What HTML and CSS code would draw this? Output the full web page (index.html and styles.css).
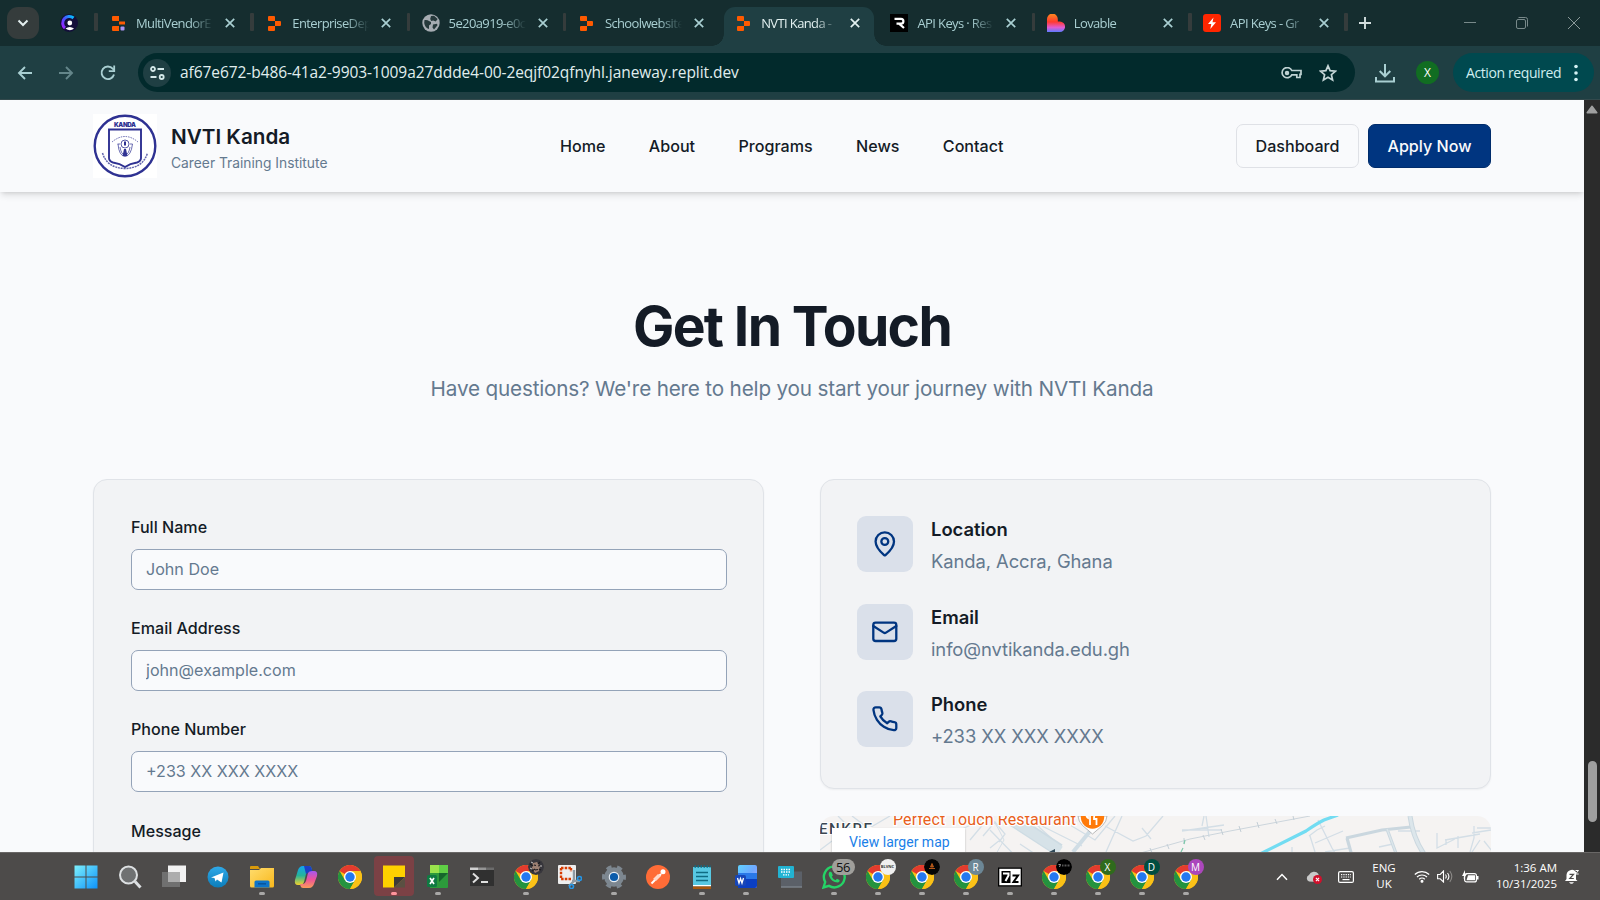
FILE: index.html
```html
<!DOCTYPE html>
<html lang="en">
<head>
<meta charset="utf-8">
<title>NVTI Kanda - Career Training Institute</title>
<link rel="stylesheet" href="styles.css">
</head>
<body>
<svg class="defs" width="0" height="0">
  <defs>
    <linearGradient id="win" x1="0" y1="0" x2="1" y2="1"><stop offset="0" stop-color="#7df0fc"/><stop offset="1" stop-color="#0d92fa"/></linearGradient>
    <linearGradient id="tg" x1="0" y1="0" x2="0" y2="1"><stop offset="0" stop-color="#2fa9e8"/><stop offset="1" stop-color="#0c7dba"/></linearGradient>
    <linearGradient id="folder" x1="0" y1="0" x2="1" y2="1"><stop offset="0" stop-color="#ffdc6d"/><stop offset="1" stop-color="#f9b81c"/></linearGradient>
    <linearGradient id="cpa" x1="0" y1="0" x2="0" y2="1"><stop offset="0" stop-color="#12a4f0"/><stop offset=".5" stop-color="#25b49a"/><stop offset="1" stop-color="#f3d02c"/></linearGradient>
    <linearGradient id="cpb" x1="0" y1="0" x2="0" y2="1"><stop offset="0" stop-color="#a557ee"/><stop offset=".5" stop-color="#ee5399"/><stop offset="1" stop-color="#fb9b5a"/></linearGradient>
    <linearGradient id="love" x1="0" y1="0" x2="0" y2="1"><stop offset="0" stop-color="#ff8a1e"/><stop offset=".45" stop-color="#ff3a2f"/><stop offset=".75" stop-color="#e25bd0"/><stop offset="1" stop-color="#5b7cff"/></linearGradient>
    <linearGradient id="clerk" x1="0" y1="1" x2="1" y2="0"><stop offset="0" stop-color="#a020ff"/><stop offset=".5" stop-color="#4a50ff"/><stop offset="1" stop-color="#00c8ff"/></linearGradient>
    <linearGradient id="word" x1="0" y1="0" x2="1" y2="1"><stop offset="0" stop-color="#5fd2ff"/><stop offset=".5" stop-color="#6fa8ff"/><stop offset="1" stop-color="#b9a6ff"/></linearGradient>
    <symbol id="replit" viewBox="0 0 13 15"><path fill="#ff5a00" d="M1 0h5a1 1 0 0 1 1 1v4H1a1 1 0 0 1-1-1V1a1 1 0 0 1 1-1zM7 5h5a1 1 0 0 1 1 1v3a1 1 0 0 1-1 1H7zM1 10h6v4a1 1 0 0 1-1 1H1a1 1 0 0 1-1-1v-3a1 1 0 0 1 1-1z"/></symbol>
    <symbol id="x" viewBox="0 0 10 10"><path d="M.8.8l8.400 8.400M9.200.8L.8 9.200" fill="none" stroke="currentColor" stroke-width="1.7"/></symbol>
    <symbol id="chrome" viewBox="0 0 24 24">
      <circle cx="12" cy="12" r="12" fill="#fbc116"/>
      <path fill="#e33b2e" d="M12 12L1.600 6A12 12 0 0 1 22.400 6H12z"/>
      <path fill="#24933f" d="M1.600 6A12 12 0 0 0 12 24l5.200-9L12 12 6.800 15z"/>
      <path fill="#fbc116" d="M22.400 6A12 12 0 0 1 12 24l5.200-9A6 6 0 0 0 17.200 9L14 6z"/>
      <circle cx="12" cy="12" r="6" fill="#fff"/><circle cx="12" cy="12" r="4.700" fill="#2478f0"/>
    </symbol>
  </defs>
</svg>

<div class="tabstrip">
  <div class="tab-search"><svg width="12" height="8" viewBox="0 0 12 8"><path d="M1.500 1.500L6 6l4.500-4.500" fill="none" stroke="#e3eeee" stroke-width="2"/></svg></div>
  <svg class="pinned" width="18" height="18" viewBox="0 0 18 18"><circle cx="9" cy="9" r="9" fill="#130f3a"/><path d="M13.500 4A6.300 6.300 0 1 0 5 14" fill="none" stroke="url(#clerk)" stroke-width="3"/><circle cx="9.800" cy="9" r="2.400" fill="#fff"/><path d="M5.500 14.500q4.300-3 8.500 0-4 3.500-8.500 0z" fill="#fff"/></svg>
  <div class="tab sep"><span class="fav"><svg width="13" height="15" viewBox="0 0 13 15"><path fill="#ff5a00" d="M1 0h6v5H1a1 1 0 0 1-1-1V1a1 1 0 0 1 1-1zM7 5.500h6v3H7zM1 10h6v5H1a1 1 0 0 1-1-1v-3a1 1 0 0 1 1-1z"/><rect x="8.500" y="10.500" width="4" height="4" rx="1" fill="#a993f5"/></svg></span><span class="tt">MultiVendorE</span><svg class="cl"><use href="#x"/></svg></div>
  <div class="tab sep"><span class="fav"><svg width="13" height="15"><use href="#replit"/></svg></span><span class="tt">EnterpriseDep</span><svg class="cl"><use href="#x"/></svg></div>
  <div class="tab sep"><span class="fav"><svg width="18" height="18" viewBox="0 0 18 18"><circle cx="9" cy="9" r="8.700" fill="#a6acb2"/><path fill="#26393b" d="M2.500 6q3-.5 4.500 1l2 1v2l-2 1.500v3.500Q3 14 2.200 9zM9 2l3-.3 3.700 3.300-2 2.500-2.500-1-2 .5-1-2zM11 10.500l4-.8.500 1.500-3.500 4.300-1.500-2z"/></svg></span><span class="tt">5e20a919-e0c</span><svg class="cl"><use href="#x"/></svg></div>
  <div class="tab sep"><span class="fav"><svg width="13" height="15"><use href="#replit"/></svg></span><span class="tt">Schoolwebsite</span><svg class="cl"><use href="#x"/></svg></div>
  <div class="tab active"><span class="fav"><svg width="13" height="15"><use href="#replit"/></svg></span><span class="tt">NVTI Kanda - </span><svg class="cl"><use href="#x"/></svg></div>
  <div class="tab"><span class="fav"><svg width="18" height="18" viewBox="0 0 18 18"><path d="M0 0h18v18H0z"/><path d="M4.500 4.800h6.500a2.400 2.400 0 0 1 0 4.800H6.500M9 9.600l5 4.400" fill="none" stroke="#fff" stroke-width="2.200"/></svg></span><span class="tt">API Keys · Res</span><svg class="cl"><use href="#x"/></svg></div>
  <div class="tab sep"><span class="fav"><svg width="18" height="18" viewBox="0 0 18 18"><path fill="url(#love)" d="M0 18V5a5.400 5.400 0 0 1 10.800 0v2.500h2a5.200 5.200 0 0 1 0 10.500z"/></svg></span><span class="tt">Lovable</span><svg class="cl"><use href="#x"/></svg></div>
  <div class="tab sep"><span class="fav"><svg width="18" height="18" viewBox="0 0 18 18"><rect width="18" height="18" rx="3" fill="#ff2600"/><path fill="#fff" d="M10.500 3.500L5 10h3.300l-1 5L13 8.300H9.500z"/></svg></span><span class="tt">API Keys - Gr</span><svg class="cl"><use href="#x"/></svg></div>
  <div class="newtab sep"><svg width="12" height="12" viewBox="0 0 12 12"><path d="M6 0v12M0 6h12" stroke="#d2dede" stroke-width="1.900"/></svg></div>
  <div class="winctl">
    <svg width="12" height="12" viewBox="0 0 12 12"><path d="M0 5.500h12" stroke="#78898a"/></svg>
    <svg width="12" height="12" viewBox="0 0 12 12" fill="none" stroke="#78898a"><rect x=".5" y="2.500" width="9" height="9" rx="1.500"/><path d="M2.500.5H9.500a2 2 0 0 1 2 2v7"/></svg>
    <svg width="12" height="12" viewBox="0 0 12 12"><path d="M0 0l12 12M12 0L0 12" stroke="#8a9999"/></svg>
  </div>
</div>

<div class="toolbar">
  <svg class="back" width="16" height="14" viewBox="0 0 16 14"><path d="M15 7H2M8 1L2 7l6 6" fill="none" stroke="#a9cfd2" stroke-width="1.900"/></svg>
  <svg class="fwd" width="16" height="14" viewBox="0 0 16 14"><path d="M1 7H14M8 1l6 6-6 6" fill="none" stroke="#64868a" stroke-width="1.900"/></svg>
  <svg class="rel" width="16" height="16" viewBox="0 0 16 16"><path d="M14 9.500A6.300 6.300 0 1 1 12.700 3.700L14 5" fill="none" stroke="#a9cfd2" stroke-width="1.900"/><path d="M14.200.5v5.700H8.800" fill="none" stroke="#a9cfd2" stroke-width="1.800"/></svg>
  <div class="omni">
    <span class="site"><svg width="15" height="14" viewBox="0 0 15 14" fill="none" stroke="#d4e8e9" stroke-width="1.800"><circle cx="3" cy="3" r="2"/><path d="M7.500 3H14M.5 11H6.500"/><circle cx="11.700" cy="11" r="2"/></svg></span>
    <span class="url">af67e672-b486-41a2-9903-1009a27ddde4-00-2eqjf02qfnyhl.janeway.replit.dev</span>
    <svg class="key" width="21" height="12" viewBox="0 0 21 12" fill="none" stroke="#bfd2d3" stroke-width="1.700"><path d="M10.800 3.500H20v3.800h-1V10.500h-3.200V7.800H10.800A5.100 5.100 0 1 1 10.800 3.500z"/><circle cx="6" cy="6" r="1.400" fill="#bfd2d3"/></svg>
    <svg class="star" width="18" height="18" viewBox="0 0 18 18"><path d="M9 1.800l2.100 4.900 5.300.5-4 3.500 1.200 5.200L9 13.200l-4.600 2.700 1.200-5.200-4-3.500 5.300-.5z" fill="none" stroke="#c5d6d7" stroke-width="1.700"/></svg>
  </div>
  <svg class="dl" width="20" height="20" viewBox="0 0 20 20" fill="none" stroke="#a9cfd2" stroke-width="2"><path d="M10 1v12M4.700 8L10 13.300 15.300 8M1 14v4.500h18V14"/></svg>
  <span class="me">X</span>
  <span class="action">Action required<svg width="4" height="18" viewBox="0 0 4 18" fill="#d4f2f4"><circle cx="2" cy="2.500" r="1.800"/><circle cx="2" cy="9" r="1.800"/><circle cx="2" cy="15.500" r="1.800"/></svg></span>
</div>

<div class="view">
  <div class="page">
    <header class="head">
      <svg class="logo" width="64" height="64" viewBox="0 0 64 64">
        <path fill="#fff" d="M0 0h64v64H0z"/>
        <g fill="none" stroke="#2e3192"><circle cx="32" cy="32" r="30.300" stroke-width="2.400"/>
        <path d="M16 15.500H48V44q0 3-4 4.500-7 1-12 4.500-5-3.500-12-4.500-4-1.500-4-4.500z" stroke-width="1.900"/>
        <circle cx="32" cy="30" r="4" stroke-width=".8"/><path d="M25 30q1 12 7 12.500Q38 42 39.500 30M24.500 30h2.500M37 30h2.500M27 33q1 7 5 8.500M37 33q-1 7-5 8.500" stroke-width=".7"/>
        <path d="M19 28q13-11 26 0" stroke-width=".9" stroke-dasharray="1.500 1" opacity=".8"/><path d="M9.500 39Q14 54 32 54.500 50 54 54.500 39" stroke-width="1.500" stroke-dasharray="2 .8" opacity=".75"/></g>
        <path d="M31 35h2l1.500 7h-5zM31 27.500h2v4h-2z" fill="#2e3192"/>
        <text class="crest" x="32" y="13.200" text-anchor="middle" textLength="22">KANDA</text>
      </svg>
      <div class="brand"><b>NVTI Kanda</b><span>Career Training Institute</span></div>
      <nav class="nav"><a>Home</a><a>About</a><a>Programs</a><a>News</a><a>Contact</a></nav>
      <div class="cta"><a class="btn">Dashboard</a><a class="btn primary">Apply Now</a></div>
    </header>
    <main class="main">
      <h1>Get In Touch</h1>
      <p class="lead">Have questions? We're here to help you start your journey with NVTI Kanda</p>
      <div class="cols">
        <form class="card form">
          <label>Full Name</label><input placeholder="John Doe">
          <label>Email Address</label><input placeholder="john@example.com">
          <label>Phone Number</label><input placeholder="+233 XX XXX XXXX">
          <label>Message</label>
        </form>
        <div class="right">
          <div class="card info">
            <div class="item"><span class="ico"><svg viewBox="0 0 24 24"><path d="M20 10c0 4.993-5.539 10.193-7.399 11.799a1 1 0 0 1-1.202 0C9.539 20.193 4 14.993 4 10a8 8 0 0 1 16 0"/><circle cx="12" cy="10" r="3"/></svg></span><div><b>Location</b><span>Kanda, Accra, Ghana</span></div></div>
            <div class="item"><span class="ico"><svg viewBox="0 0 24 24"><rect width="20" height="16" x="2" y="4" rx="2"/><path d="m22 7-8.970 5.700a1.940 1.940 0 0 1-2.060 0L2 7"/></svg></span><div><b>Email</b><span>info@nvtikanda.edu.gh</span></div></div>
            <div class="item"><span class="ico"><svg viewBox="0 0 24 24"><path d="M22 16.920v3a2 2 0 0 1-2.180 2 19.790 19.790 0 0 1-8.630-3.070 19.500 19.500 0 0 1-6-6 19.790 19.790 0 0 1-3.070-8.670A2 2 0 0 1 4.110 2h3a2 2 0 0 1 2 1.720 12.840 12.840 0 0 0 .7 2.810 2 2 0 0 1-.45 2.110L8.090 9.910a16 16 0 0 0 6 6l1.270-1.270a2 2 0 0 1 2.110-.45 12.840 12.840 0 0 0 2.810.7A2 2 0 0 1 22 16.920z"/></svg></span><div><b>Phone</b><span>+233 XX XXX XXXX</span></div></div>
          </div>
          <div class="map">
            <svg width="671" height="60" viewBox="0 0 671 60" fill="none">
              <path d="M0 0h671v60H0z" fill="#f5f3f2"/>
              <g stroke="#d3dee6" stroke-width="1.300">
                <path d="M0 34l12-9M18 0l12 12M32 0l24 18M46 14L70 0M140 14L170 0M150 24l20-24M163 20l12-14 10 12-6 8M170 32l10-8M200 28l30 20M222 10L262 30M235 0l40 24 20-24M170 14L205 50M285 10l28 15 13-5L343 0M302 0L286 36M322 12l9 11M210 0l10 12 20 18"/>
                <path d="M362 14h40M386 0l3 21M384 0l-2 10M362 15l42-6M498 4l14 28 3 5M489 20l8-6 8-4M490 20l5 16M495 27l28-12M505 36l25-4M472 37v-6M578 15h22M559 31l14-3M617 17v15l18-9M625 24l35-6M626 23v6M638 20v12M654 10v12l-4 14M652 17l19-3M660 24l-8 12M657 12h14M664 25l8 10"/>
              </g>
              <path d="M172 2l7 12 5 10-8 14" stroke="#d3dee6"/>
              <path d="M187 0l52 34" stroke="#cddbe3" stroke-width="13"/><path d="M188 1l52 34" stroke="#d6e2e8" stroke-width="10"/>
              <path d="M253 36l18-22" stroke="#d0dde5" stroke-width="4"/>
              <path d="M229 36l6-3v3z" fill="#2f4858"/>
              <path d="M310 40l60-17 40-8 80-15" stroke="#ccd5dc"/><path d="M330 32l2 5M347 28l2 5M364 22v6M383 19l2 5M401 13l2 6M419 10l2 6M437 6l2 6M455 3l2 5M473 0l1 4" stroke="#c3ced6"/>
              <path d="M365 24l-1 4M363 32l-2 4" stroke="#7fc9ab" stroke-width="1.200"/>
              <path d="M440 38l46-23q10-7 18-11l14-5" stroke="#72dcf2" stroke-width="3.200"/>
              <g stroke="#cad7df" stroke-width="3.200"><path d="M526 22l36-8 29-3M527 22l5 18M567 13l10 27"/><path d="M590 0q3 22 14 38" stroke-width="5"/></g>
              <g stroke="#dce6eb" stroke-width="1.300"><path d="M567 13l10 27"/><path d="M590 0q3 22 14 38" stroke-width="3"/></g>
              <path d="M258 0a14.500 14.500 0 0 0 4.500 9.500L272.500 18l10-8.500A14.500 14.500 0 0 0 287 0z" fill="#fff" stroke="#a8a8a8" stroke-width=".8"/><circle cx="272.500" cy="1" r="11.700" fill="#ff7a09"/><path d="M268-4v6q-2-1-2-6M270-4v13M277-4q-3 1-3 7h2.500v6" stroke="#fff" stroke-width="1.800"/>
              <text class="poi" x="73" y="9" textLength="183">Perfect Touch Restaurant</text>
              <text class="area" x="-1" y="18" textLength="53">ENKRE</text>
            </svg>
            <div class="larger">View larger map</div>
          </div>
        </div>
      </div>
    </main>
  </div>
  <div class="scroll"><svg width="12" height="9" viewBox="0 0 12 9"><path d="M6 1.300L10.800 7.700H1.200z" fill="#a0a0a0" stroke="#a0a0a0" stroke-width="1.500" stroke-linejoin="round"/></svg><i></i></div>
</div>

<div class="taskbar">
  <div class="apps">
    <span class="app"><svg viewBox="0 0 24 24"><path fill="url(#win)" d="M.5.5h11v11H.5zM12.500.5h11v11h-11zM.5 12.500h11v11H.5zM12.500 12.500h11v11h-11z"/></svg></span>
    <span class="app"><svg viewBox="0 0 24 24" fill="none" stroke="#dde0e2"><circle cx="10.500" cy="10" r="8.500" stroke-width="2" fill="#6f7172"/><path d="M17 16.500l5.500 6" stroke-width="3"/></svg></span>
    <span class="app"><svg viewBox="0 0 24 24"><path fill="#f2f2f2" d="M6 .5h18V17H6z"/><path fill="#707070" d="M0 7h18v15H0z"/><path fill="#adadad" d="M6 7h12v10H6z"/></svg></span>
    <span class="app"><svg viewBox="0 0 24 24"><circle cx="12" cy="12" r="10.500" fill="url(#tg)"/><path fill="#fff" d="M5 12.500L17.500 7.500l-2 10-4.500-3-1.500 2-1-3.500z"/></svg></span>
    <span class="app run"><svg viewBox="0 0 24 24"><path fill="#d99a0b" d="M0 2q0-1 1-1h7l2 3H0z"/><path fill="url(#folder)" d="M0 5h9l2-2h13v18q0 1.500-1.500 1.500h-21Q0 22.500 0 21z"/><path fill="#0f74c9" d="M4.500 22.500V17q0-1.500 1.500-1.500h12q1.500 0 1.500 1.500v5.500z"/><path stroke="#0b549b" stroke-width="1.500" d="M8 18.800h8"/></svg></span>
    <span class="app"><svg viewBox="0 0 24 24"><path fill="url(#cpa)" d="M6 2q1-1 3-1h6q2 0 2.500 2l.5 3h-3q-2 0-3 3l-2 8q-1 3-4 3H4q-4 0-3-5L4 5q.7-2 2-3z"/><path fill="#1c3fc4" d="M10 1h5q2 0 2.500 2l1 4h-3L12 9z"/><path fill="url(#cpb)" d="M18 22q-1 1-3 1H9q-2 0-2.500-2L6 19h3q2 0 3-3l2-8q1-2 4-2h2q4 0 3 5l-3 8q-.7 2-2 3z"/></svg></span>
    <span class="app"><svg><use href="#chrome"/></svg></span>
    <span class="app run sticky"><svg viewBox="0 0 24 24"><path fill="#ffd100" d="M1 .5h22V12L12 22.500H1z"/><path fill="#3c3a38" d="M12 12h11L12 22.500z"/><path fill="#5a5042" d="M23 12v10.500H12z"/></svg></span>
    <span class="app run"><svg viewBox="0 0 24 24"><path fill="#2c9a3b" d="M4 1q0-1 1-1h16q1 0 1 1v21q0 1-1 1H4z"/><path fill="#9be34c" d="M4 0h9v8H4z"/><path fill="#5fce45" d="M13 0h9v8h-9z"/><path fill="#15662c" d="M13 8h9l-9 9z"/><rect x="1" y="10" width="10" height="12" rx="1.500" fill="#0f7a42"/><path d="M4 13l4 6M8 13l-4 6" stroke="#fff" stroke-width="1.700"/></svg></span>
    <span class="app"><svg viewBox="0 0 24 24"><path fill="#303030" d="M0 5h24v16H0z"/><path fill="#d0d0d0" d="M0 2.500h8V5H0z"/><path fill="#949494" d="M8 2.500h8V5H8z"/><path fill="#6b6b6b" d="M16 2.500h8V5h-8z"/><path d="M3 8.500l5 4.500-5 4.500M11 17h7" fill="none" stroke="#e0e0e0" stroke-width="2"/></svg></span>
    <span class="app run"><svg><use href="#chrome"/></svg><svg class="av" viewBox="0 0 16 16"><circle cx="8" cy="8" r="8" fill="#37363c"/><path fill="#9d8073" d="M5 4l4-1 3 4-1 5-4 2-3-5z"/><path d="M2 5l3 2M4 12l3-2M6 6l2 .5M10 7l2-.5M7 11l3-.5M12 3l-2 2M13 11l-2-1" stroke="#1e1c20" stroke-width="1.200"/><path d="M3 3l2 1M13 6v2M2 9l2 1" stroke="#c9c5c3"/></svg></span>
    <span class="app"><svg viewBox="0 0 24 24"><rect x="0" y="0" width="18" height="19" rx="1" fill="#eee"/><path d="M3 3h10M3 3v11h10M13 3v4" fill="none" stroke="#d83b01" stroke-width="2.400" stroke-dasharray="2.500 1.200"/><path d="M16 5v11l-5 5M14 16h8" fill="none" stroke="#8f9aa3" stroke-width="2.400"/><circle cx="13.500" cy="21.500" r="2" fill="none" stroke="#2496e8" stroke-width="1.600"/><circle cx="21.500" cy="13.500" r="2" fill="none" stroke="#2496e8" stroke-width="1.600"/></svg></span>
    <span class="app run"><svg viewBox="0 0 24 24"><circle cx="12" cy="12" r="9.800" fill="#7d8790"/><circle cx="12" cy="12" r="10" fill="none" stroke="#7d8790" stroke-width="4" stroke-dasharray="5 5.470" stroke-dashoffset="2.500"/><circle cx="12" cy="12" r="5.300" fill="#e8eef4"/><circle cx="12" cy="12" r="4.100" fill="#0b5cab"/></svg></span>
    <span class="app"><svg viewBox="0 0 24 24"><circle cx="12" cy="12" r="12" fill="#ff6c37"/><path d="M5.500 18.500L15 9" stroke="#fff" stroke-width="2"/><path d="M7 14l5-5 3 2-5 5z" fill="#ffd9cb"/><circle cx="17" cy="6.800" r="2.500" fill="#fff"/></svg></span>
    <span class="app run"><svg viewBox="0 0 24 24"><path fill="#58c8e2" d="M3 2h18v19H3z"/><path fill="#fff" d="M3 20h18v1.500H3z"/><path fill="#a8580d" d="M3 21.500h18V24H3z"/><path stroke="#0f6c83" stroke-width="1.600" d="M6 7.500h12M6 11.500h12M6 15.500h12"/><path stroke="#0f6c83" stroke-width="2.500" stroke-dasharray="1.500 1.500" d="M4.500 1.500h16"/></svg></span>
    <span class="app run"><svg viewBox="0 0 24 24"><rect x="4" y="0" width="19" height="23" rx="2" fill="url(#word)"/><path fill="#2a78e8" d="M4 8h19v7H4z"/><path fill="#0b3fc2" d="M4 14h19v7q0 2-2 2H4z"/><rect x="1" y="10" width="11" height="11" rx="1.800" fill="#1746b8"/><path d="M3.500 13l1.500 5 1.500-4.500L8 18l1.500-5" fill="none" stroke="#fff" stroke-width="1.300"/></svg></span>
    <span class="app"><svg viewBox="0 0 24 24"><path fill="#5b6068" d="M3 6.500h21v16H3z"/><path fill="#8b939b" d="M3 21.500h21v1H3z"/><rect width="16" height="12" x="0" y="1" rx="1" fill="#22b3d3"/><path d="M3 4.500h10M3 7h10M5 9.800h6" stroke="#fff" stroke-width="1.300" stroke-dasharray="1.500 1"/></svg></span>
    <span class="app run"><svg viewBox="0 0 24 24" fill="none"><path d="M1.500 22.500L3.200 17A10.400 10.400 0 1 1 7 20.900z" stroke="#25d366" stroke-width="2.400"/><path d="M8 6.500q-2 1.500-1 4.500 2.500 6 8.500 6.500 2.500-.5 2-2.500l-2.500-1.200-1.500 1.500q-2.500-1-3.700-3.500l1-1.300-1-3z" fill="#25d366"/></svg><i class="count">56</i></span>
    <span class="app run"><svg><use href="#chrome"/></svg><i class="av blanc">BLVNC</i></span>
    <span class="app run"><svg><use href="#chrome"/></svg><svg class="av" viewBox="0 0 16 16"><circle cx="8" cy="8" r="8" fill="#050505"/><path d="M8 4.500l1.500 3.500h-3zM5 9.500h6" fill="#b4581a" stroke="#b4581a"/></svg></span>
    <span class="app run"><svg><use href="#chrome"/></svg><i class="av slate">R</i></span>
    <span class="app run"><svg viewBox="0 0 24 24"><path fill="#000" d="M0 2.500h24v19H0z"/><path fill="#fff" d="M1.300 3.800h21.400v16.400H1.300z"/><path fill="#000" d="M3.500 6h9v12h-9z"/><path d="M5 8.500h5.500v2L7.500 16" fill="none" stroke="#fff" stroke-width="2"/><path d="M14.500 10.500H20L15.500 17h5" fill="none" stroke="#000" stroke-width="2"/></svg></span>
    <span class="app run"><svg><use href="#chrome"/></svg><svg class="av" viewBox="0 0 16 16"><circle cx="8" cy="8" r="8"/><path d="M2.500 5.500h2L3.500 8" fill="none" stroke="#bbb" stroke-width=".8"/><path d="M6 6.500h8" stroke="#555" stroke-width="2" stroke-dasharray="1 .5"/></svg></span>
    <span class="app run"><svg><use href="#chrome"/></svg><i class="av green">X</i></span>
    <span class="app run"><svg><use href="#chrome"/></svg><i class="av teal">D</i></span>
    <span class="app run"><svg><use href="#chrome"/></svg><i class="av purple">M</i></span>
  </div>
  <div class="tray">
    <svg width="12" height="8" viewBox="0 0 12 8"><path d="M1 6.800L6 1.500l5 5.300" fill="none" stroke="#fff" stroke-width="1.500"/></svg>
    <svg class="t2" width="16" height="14" viewBox="0 0 16 14"><path fill="#c9c9c9" d="M3 11.500a3.500 3.500 0 0 1 0-6.500 5.500 5.500 0 0 1 9.500-1v8z"/><circle cx="11.500" cy="9.500" r="4.500" fill="#d1102c"/><path d="M9.900 7.900l3.200 3.200M13.100 7.900l-3.200 3.200" stroke="#fff" stroke-width="1.100"/></svg>
    <svg class="t3" width="16" height="12" viewBox="0 0 16 12" fill="none" stroke="#fff"><rect x=".6" y=".6" width="14.800" height="10.800" rx="1.500" stroke-width="1.200"/><path d="M3 3.700h10M3 6h10" stroke-width="1.200" stroke-dasharray="1.300 1"/><path d="M4.500 8.600h7" stroke-width="1.200"/></svg>
    <div class="lang">ENG<br>UK</div>
    <svg class="t4" width="16" height="13" viewBox="0 0 16 13" fill="none" stroke="#fff" stroke-width="1.200"><path d="M.8 4.500a10.300 10.300 0 0 1 14.400 0M3 7a7.200 7.200 0 0 1 10 0M5.200 9.300a4 4 0 0 1 5.600 0"/><circle cx="8" cy="11.300" r=".9" fill="#fff"/></svg>
    <svg class="t5" width="16" height="13" viewBox="0 0 16 13" fill="none" stroke="#fff" stroke-width="1.100"><path d="M.6 4.500h2.600L6.500 1v11L3.200 8.800H.6zM8.500 4.500q1.500 2 0 4"/><path d="M10.500 3q2.800 3.500 0 7" /><path d="M12.800 1q4 5.500 0 11" stroke="#8a8886"/></svg>
    <svg class="t6" width="17" height="13" viewBox="0 0 17 13"><rect x="2.600" y="3.600" width="11.800" height="8.300" rx="2" fill="none" stroke="#fff" stroke-width="1.200"/><path fill="#fff" d="M6 5.300h7v5H4.500zM15 6h1.500v3.500H15zM3 0L0 6h2l-.5 3L5 4H3z"/></svg>
    <div class="clock">1:36 AM<br>10/31/2025</div>
    <svg class="t7" width="15" height="16" viewBox="0 0 15 16"><path fill="#fff" d="M0 12l1.500-2V6a5.300 5.300 0 0 1 9.500-3v7.500l1.500 1.500zM4 13.200h5q-2.500 3-5 0z"/><path d="M4.500 5.300h4L4.800 9.500h4" fill="none" stroke="#4d4b4a" stroke-width="1.200"/><path d="M10.500 1.500h3L10.500 5h3.200" fill="none" stroke="#fff"/></svg>
  </div>
</div>
</body>
</html>
```
FILE: styles.css
```css
* { box-sizing: border-box; }
body { margin: 0; width: 1600px; height: 900px; overflow: hidden; display: flex; flex-direction: column; font-family: "Open Sans", "Noto Sans", sans-serif; background: #1f3f43; }
svg { flex: none; display: block; }
.defs { position: absolute; }

/* Browser tabs */
.tabstrip { height: 46px; background: #152d2f; display: flex; align-items: center; color: #a9cfd2; flex: none; }
.tab-search { width: 32px; height: 32px; margin-left: 7px; border-radius: 11px; background: #353c3c; display: flex; align-items: center; justify-content: center; }
.pinned { margin: 0 16px 0 21px; }
.tab, .newtab { width: 156.300px; height: 46px; display: flex; align-items: center; position: relative; flex: none; }
.sep::before { content: ""; position: absolute; left: 0; top: 13px; width: 3.500px; height: 18px; background: #353c3c; border-radius: 1px; }
.fav { width: 18px; margin-left: 15px; display: flex; justify-content: center; }
.tt { width: 77px; margin-left: 9px; font-size: 13px; letter-spacing: -0.620px; white-space: nowrap; overflow: hidden; -webkit-mask-image: linear-gradient(90deg, #000 70%, transparent 100%); mask-image: linear-gradient(90deg, #000 70%, transparent 100%); }
.cl { width: 10px; height: 10px; margin-left: 12px; }
.active { color: #e3f1f1; z-index: 1; }
.active::before { content: ""; position: absolute; z-index: -1; left: 5px; top: 7px; width: 150px; height: 39px; background: #1f3f43; border-radius: 11px 11px 0 0; }
.active::after { content: ""; position: absolute; z-index: -1; left: -7px; bottom: 0; width: 174px; height: 12px; background: radial-gradient(circle at 0 0, transparent 11.500px, #1f3f43 12px) left / 12px 12px no-repeat, radial-gradient(circle at 100% 0, transparent 11.500px, #1f3f43 12px) right / 12px 12px no-repeat; }
.newtab { width: 40px; padding-left: 15px; }
.winctl { margin-left: auto; display: flex; gap: 40px; padding-right: 20px; }

/* Toolbar */
.toolbar { height: 54px; flex: none; background: #1f3f43; border-bottom: 1px solid #33494c; display: flex; align-items: center; }
.back { margin-left: 17px; }
.fwd { margin-left: 25px; }
.rel { margin-left: 26px; }
.omni { margin-left: 22px; width: 1217px; height: 39px; border-radius: 20px; background: #022a2c; display: flex; align-items: center; }
.site { width: 28px; height: 28px; margin-left: 5px; border-radius: 50%; background: #1f3f43; display: flex; align-items: center; justify-content: center; }
.url { margin-left: 9px; font-size: 15.500px; letter-spacing: -0.065px; color: #e0eeee; white-space: nowrap; position: relative; top: -1px; }
.key { margin-left: auto; }
.star { margin: 0 18px 0 17px; }
.dl { margin-left: 20px; }
.me { width: 23px; height: 23px; margin-left: 21px; border-radius: 50%; background: #116d22; color: #fff; font-size: 12px; display: flex; align-items: center; justify-content: center; }
.action { width: 141px; height: 39px; margin-left: 14px; padding: 0 16px 0 13px; border-radius: 20px; background: #00494f; color: #cfeef0; font-size: 14px; letter-spacing: -0.400px; white-space: nowrap; display: flex; align-items: center; justify-content: space-between; }

/* Page */
.view { height: 752px; flex: none; display: flex; overflow: hidden; }
.page { width: 1584px; background: #f9fafc; font-family: Inter, sans-serif; color: #141b26; overflow: hidden; }
.head { position: relative; height: 92px; padding: 0 93px; display: flex; align-items: center; box-shadow: 0 4px 7px -1px rgba(0,0,0,.12), 0 2px 4px -2px rgba(0,0,0,.12); }
.crest { font: 900 6.200px Inter, sans-serif; fill: #2e3192; }
.brand { margin-left: 14px; width: 389px; display: flex; flex-direction: column; padding-top: 3px; }
.brand b { font-size: 20.700px; line-height: 28px; font-weight: 600; }
.brand span { font-size: 13.800px; line-height: 20px; color: #64798f; margin-top: 2px; }
.nav { display: flex; gap: 43.400px; font-size: 16.100px; font-weight: 500; }
.cta { margin-left: auto; display: flex; gap: 9px; }
.btn { width: 123px; height: 44px; border: 1px solid #dfe1e6; border-radius: 7px; font-size: 16.100px; font-weight: 500; display: flex; align-items: center; justify-content: center; }
.primary { background: #003580; border-color: #002c6b; color: #f9fafc; }
.main { padding: 106px 93px 0; }
h1 { margin: 0; font-size: 55.200px; line-height: 56px; font-weight: 700; letter-spacing: -1.650px; text-align: center; }
.lead { margin: 19px 0 0; font-size: 20.700px; line-height: 32px; letter-spacing: -0.180px; text-align: center; color: #64798f; }
.cols { margin-top: 74px; display: grid; grid-template-columns: 671px 671px; gap: 56px; }
.card { background: #f2f3f5; border: 1px solid #e0e3e8; border-radius: 14px; padding: 36px; box-shadow: 0 1px 2px rgba(0,0,0,.05); }
.form { height: 500px; padding-left: 37px; }
.form label { display: block; font-size: 16.100px; line-height: 23px; font-weight: 500; }
.form input { display: block; width: 100%; height: 41px; margin: 10px 0 27.200px; padding: 0 14px 2px; border: 1px solid #94a3b8; border-radius: 7px; background: #f9fafc; font: 16.100px Inter, sans-serif; }
.form input::placeholder { color: #64798f; opacity: 1; }
.info { height: 310px; display: flex; flex-direction: column; gap: 31.500px; }
.item { height: 56px; display: flex; gap: 18px; }
.ico { width: 56px; height: 56px; border-radius: 9px; background: #dae0ea; display: flex; align-items: center; justify-content: center; }
.ico svg { width: 27.600px; height: 27.600px; fill: none; stroke: #003580; stroke-width: 2; stroke-linecap: round; stroke-linejoin: round; }
.item div { display: flex; flex-direction: column; margin-top: -1px; }
.item b { font-size: 18.400px; line-height: 28px; font-weight: 600; }
.item div span { font-size: 18.400px; line-height: 28px; letter-spacing: -0.080px; margin-top: 4.400px; color: #64798f; }
.map { position: relative; margin-top: 27px; height: 60px; border-radius: 14px 14px 0 0; overflow: hidden; }
.poi { font: 400 16px Roboto, sans-serif; fill: #e8601c; stroke: #fff; stroke-width: 2.500px; paint-order: stroke; }
.area { font: 500 15px Roboto, sans-serif; fill: #3c4650; stroke: #fff; stroke-width: 2px; paint-order: stroke; }
.larger { position: absolute; left: 12px; top: 12px; width: 133px; height: 46px; padding-left: 17px; background: #fff; box-shadow: 0 1px 2px rgba(0,0,0,.25); font: 14px/29px Roboto, sans-serif; color: #1a7fe8; white-space: nowrap; }
.scroll { width: 16px; background: #2b2b2b; display: flex; flex-direction: column; align-items: center; padding-top: 5px; }
.scroll i { width: 9px; height: 61px; margin: 647px 0 0 1px; border-radius: 5px; background: #9f9f9f; }

/* Taskbar */
.taskbar { height: 48px; flex: none; background: #4d4b4a; border-top: 1px solid #696766; display: flex; color: #fff; }
.apps { display: flex; margin-left: 63.500px; }
.app { position: relative; width: 44px; height: 47px; display: flex; justify-content: center; padding-top: 12px; }
.app svg { width: 24px; height: 24px; }
.run::after { content: ""; position: absolute; left: 19px; top: 39px; width: 6px; height: 3px; border-radius: 2px; background: #a9a8a7; }
.sticky::before { content: ""; position: absolute; left: 2px; top: 3px; width: 40px; height: 40px; border-radius: 4px; background: #7b4145; }
.sticky svg { position: relative; }
.sticky::after { background: #ff949c; }
.app .av { position: absolute; left: 24px; top: 6px; width: 16px; height: 16px; border-radius: 50%; font-style: normal; font-size: 10px; line-height: 16px; text-align: center; overflow: hidden; }
.app .blanc { background: #f0f0f0; color: #333; font-size: 4px; font-weight: 700; }
.slate { background: #6c8796; }
.green { background: #2f6b1c; }
.teal { background: #004d40; }
.purple { background: #ab47bc; }
.count { position: absolute; left: 20px; top: 6px; width: 23px; height: 16px; border-radius: 8px; background: #a09f9b; color: #111; font-style: normal; font-size: 13px; line-height: 16px; text-align: center; letter-spacing: -0.500px; }
.tray { margin-left: auto; display: flex; align-items: center; padding-right: 20px; font-size: 11.500px; line-height: 16px; }
.t2 { margin-left: 18px; }
.t3 { margin-left: 16px; }
.lang { width: 28px; margin-left: 16px; text-align: center; margin-top: -1px; }
.t4 { margin-left: 16px; }
.t5 { margin-left: 7px; }
.t6 { margin-left: 9px; }
.clock { width: 70px; margin-left: 8px; text-align: right; margin-top: -1px; }
.t7 { margin-left: 8px; }
```
